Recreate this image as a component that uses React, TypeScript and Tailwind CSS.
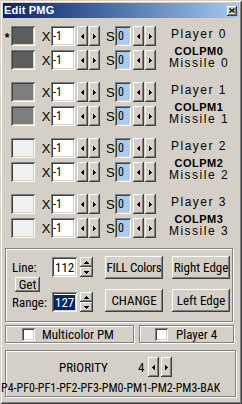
const raised =
  "bg-[#d4d0c8] shadow-[inset_-1px_-1px_0_#404040,inset_1px_1px_0_#ffffff,inset_-2px_-2px_0_#808080]";
const sunken =
  "shadow-[inset_1px_1px_0_#808080,inset_-1px_-1px_0_#ffffff,inset_2px_2px_0_#404040,inset_-2px_-2px_0_#d4d0c8]";
const etched = "border border-[#808080] shadow-[inset_1px_1px_0_#ffffff,1px_1px_0_#ffffff]";

const players = [
  { n: 0, color: "bg-[#5e5e5e]" },
  { n: 1, color: "bg-[#7e7e7e]" },
  { n: 2, color: "bg-[#f0f0f0]" },
  { n: 3, color: "bg-[#f0f0f0]" },
];

function Arrow({ dir }: { dir: "left" | "right" | "up" | "down" }) {
  // tiny pixel triangles like the classic spin buttons
  if (dir === "left" || dir === "right") {
    const cols = dir === "left" ? [2, 1, 0] : [0, 1, 2];
    return (
      <svg width="3" height="5" shapeRendering="crispEdges">
        {cols.map((c, i) => (
          <rect key={i} x={i} y={c} width="1" height={5 - c * 2} fill="#000" />
        ))}
      </svg>
    );
  }
  const rows = dir === "up" ? [2, 1, 0] : [0, 1, 2];
  return (
    <svg width="5" height="3" shapeRendering="crispEdges">
      {rows.map((r, i) => (
        <rect key={i} x={r} y={i} width={5 - r * 2} height="1" fill="#000" />
      ))}
    </svg>
  );
}

function SpinH({ gap = "ml-[1px]" }: { gap?: string }) {
  return (
    <>
      <div className={`ml-[2px] w-[11px] h-[20px] flex items-center justify-center ${raised}`}>
        <Arrow dir="left" />
      </div>
      <div className={`${gap} w-[11px] h-[20px] flex items-center justify-center ${raised}`}>
        <Arrow dir="right" />
      </div>
    </>
  );
}

function SpinV() {
  return (
    <div className="ml-[3px] w-[13px] h-[20px] flex flex-col">
      <div className={`h-[10px] flex items-center justify-center ${raised}`}>
        <Arrow dir="up" />
      </div>
      <div className={`h-[10px] flex items-center justify-center ${raised}`}>
        <Arrow dir="down" />
      </div>
    </div>
  );
}

function PmRow({ color, star }: { color: string; star?: boolean }) {
  return (
    <div className="flex items-center h-[20px]">
      <div className="w-[8px] text-center font-['Liberation_Sans',sans-serif] font-bold text-[12px] pt-[4px]">
        {star ? "*" : ""}
      </div>
      <div className={`w-[24px] h-[20px] ${color} ${sunken}`} />
      <div className="ml-[6px] w-[10px] text-center font-['Liberation_Sans',sans-serif] text-[13px]">X</div>
      <div className={`w-[24px] h-[20px] bg-white flex items-center pl-[2px] ${sunken}`}>-1</div>
      <SpinH />
      <div className="ml-[6px] w-[8px] text-center font-['Liberation_Sans',sans-serif] text-[13px]">S</div>
      <div className={`ml-[1px] w-[16px] h-[20px] bg-[#a6caf0] flex items-center pl-[3px] ${sunken}`}>0</div>
      <SpinH />
    </div>
  );
}

function PmGroup({ n, color }: { n: number; color: string }) {
  return (
    <div className="flex">
      <div className="flex flex-col gap-[4px]">
        <PmRow color={color} star={n === 0} />
        <PmRow color={color} />
      </div>
      <div className="flex-1 flex flex-col items-center pl-[3px] pt-[1px] font-['Liberation_Sans',sans-serif]">
        <div className="text-[12px] leading-[14px] tracking-[1.5px]">Player {n}</div>
        <div className="mt-[4px] text-[11px] leading-[13px] font-bold tracking-[0.5px]">COLPM{n}</div>
        <div className="mt-[-2px] text-[12px] leading-[14px] tracking-[1.5px]">Missile {n}</div>
      </div>
    </div>
  );
}

function Button({ label, className }: { label: string; className: string }) {
  return (
    <div className={`flex items-center justify-center whitespace-nowrap ${raised} ${className}`}>
      {label}
    </div>
  );
}

function CheckBox() {
  return <div className={`w-[13px] h-[13px] bg-white ${sunken}`} />;
}

export default function App() {
  return (
    <div className="w-[242px] h-[404px] bg-[#d4d0c8] px-[3px] pt-[3px] flex flex-col text-black text-[12px] leading-none font-['Roboto_Condensed',sans-serif] shadow-[inset_1px_1px_0_#d4d0c8,inset_-1px_-1px_0_#404040,inset_2px_2px_0_#ffffff,inset_-2px_-2px_0_#808080] overflow-hidden">
      {/* caption */}
      <div className="h-[15px] bg-linear-to-r from-[#0a246a] to-[#a6caf0] flex items-center justify-between pl-[1px] pr-[2px]">
        <span className="text-white font-bold text-[11px] tracking-[0.2px] font-['Liberation_Sans',sans-serif]">
          Edit PMG
        </span>
        <div className={`w-[10px] h-[10px] flex items-center justify-center ${raised}`}>
          <svg width="6" height="5" viewBox="0 0 6 5">
            <path d="M0.5 0.5 L5.5 4.5 M5.5 0.5 L0.5 4.5" stroke="#000" strokeWidth="1.3" />
          </svg>
        </div>
      </div>

      <div className="mt-[8px] flex flex-col gap-[12px]">
        {players.map((p) => (
          <PmGroup key={p.n} n={p.n} color={p.color} />
        ))}
      </div>

      {/* line / range frame */}
      <div className={`mt-[10px] ml-[2px] w-[228px] h-[74px] flex ${etched}`}>
        <div className="pl-[6px] pt-[8px] flex flex-col">
          <div className="flex items-center h-[20px] text-[13px]">
            <div className="w-[40px]">Line:</div>
            <div className={`w-[25px] h-[20px] bg-white flex items-center pl-[3px] ${sunken}`}>112</div>
            <SpinV />
          </div>
          <Button label="Get" className="ml-[3px] w-[25px] h-[15px] text-[13px]" />
          <div className="flex items-center h-[20px] text-[13px]">
            <div className="w-[40px]">Range:</div>
            <div className={`w-[25px] h-[20px] bg-white flex items-center pl-[2px] ${sunken}`}>
              <span className="bg-[#0a246a] text-white px-[1px] leading-[15px]">127</span>
            </div>
            <SpinV />
          </div>
        </div>
        <div className="ml-[12px] pt-[7px] grid grid-cols-[58px_58px] gap-x-[9px] gap-y-[10px] content-start text-[13px]">
          <Button label="FILL Colors" className="h-[23px] tracking-[-0.3px]" />
          <Button label="Right Edge" className="h-[23px]" />
          <Button label="CHANGE" className="h-[23px]" />
          <Button label="Left Edge" className="h-[23px]" />
        </div>
      </div>

      {/* checkboxes */}
      <div className="mt-[3px] ml-[2px] flex h-[18px] text-[13px]">
        <div className={`w-[129px] flex items-center pl-[16px] ${etched}`}>
          <CheckBox />
          <span className="ml-[7px]">Multicolor PM</span>
        </div>
        <div className={`ml-[5px] w-[95px] flex items-center pl-[15px] ${etched}`}>
          <CheckBox />
          <span className="ml-[8px]">Player 4</span>
        </div>
      </div>

      {/* priority */}
      <div className={`mt-[7px] ml-[2px] w-[231px] h-[47px] flex flex-col ${etched}`}>
        <div className="pt-[6px] flex items-center h-[26px] text-[13px]">
          <span className="ml-[53px] w-[79px]">PRIORITY</span>
          <span className="w-[8px]">4</span>
          <SpinH gap="ml-[2px]" />
        </div>
        <div className="mt-[4px] ml-[-5px] whitespace-nowrap leading-[14px]">
          P4-PF0-PF1-PF2-PF3-PM0-PM1-PM2-PM3-BAK
        </div>
      </div>
    </div>
  );
}
